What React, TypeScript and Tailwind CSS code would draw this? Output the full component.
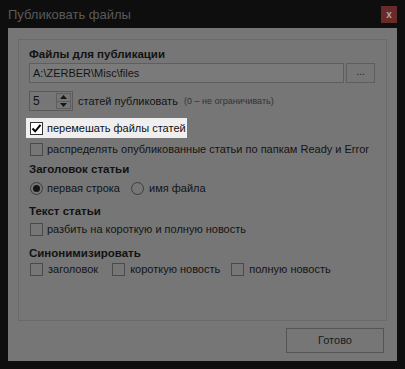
import React from "react";

const font = { fontFamily: '"Liberation Sans", Arial, sans-serif' };

function Box({ checked = false, light = false }: { checked?: boolean; light?: boolean }) {
  return (
    <span
      className={`w-[13px] h-[13px] shrink-0 border flex items-center justify-center ${
        light ? "bg-white border-[#333]" : "border-[#4a4a4a]"
      }`}
    >
      {checked && (
        <svg width="11" height="11" viewBox="0 0 11 11">
          <path d="M1.5 5.5 L4.2 8.3 L9.5 1.8" stroke="#000" strokeWidth="2" fill="none" />
        </svg>
      )}
    </span>
  );
}

function Radio({ checked = false }: { checked?: boolean }) {
  return (
    <span className="w-[13px] h-[13px] shrink-0 rounded-full border border-[#3c3c3c] flex items-center justify-center">
      {checked && <span className="w-[7px] h-[7px] rounded-full bg-[#151515]" />}
    </span>
  );
}

function Header({ text, className = "" }: { text: string; className?: string }) {
  return (
    <div className={`h-[14px] leading-[14px] text-[11.5px] font-bold text-[#121212] whitespace-nowrap ${className}`}>
      {text}
    </div>
  );
}

export default function App() {
  return (
    <div className="w-[405px] h-[369px] bg-[#0e0e0e] flex flex-col text-[#141414] whitespace-nowrap" style={font}>
      {/* title bar */}
      <div className="h-[28px] flex justify-between pl-[8px] pr-[8px]">
        <span className="text-[13px] leading-[29px] text-[#5a5a5a]">Публиковать файлы</span>
        <span className="mt-[6px] w-[16px] h-[17px] bg-[#6a2a2a] flex items-center justify-center text-[#a8a8a8] text-[10px] font-bold leading-none">
          x
        </span>
      </div>

      {/* client */}
      <div className="mx-[8px] h-[333px] bg-[#767676] pt-[11px] px-[10px] flex flex-col">
        <div className="h-[282px] border border-[#6a6a6a] pl-[10px] pt-[7px] flex flex-col">
          <Header text="Файлы для публикации" />
          <div className="mt-[2px] flex gap-[2px]">
            <div className="w-[315px] h-[20px] border border-[#5e5e5e] bg-[#7a7a7a] pl-[3px] text-[11px] leading-[18px]">
              A:\ZERBER\Misc\files
            </div>
            <div className="w-[29px] h-[20px] border border-[#5e5e5e] flex items-center justify-center text-[10px] leading-none text-[#2a1a30] pb-[2px]">
              ...
            </div>
          </div>

          <div className="mt-[8px] h-[20px] flex items-center">
            <div className="w-[44px] h-[20px] border border-[#5a5a5a] flex">
              <span className="flex-1 pl-[3px] text-[12px] leading-[18px]">5</span>
              <div className="w-[15px] my-[1px] mr-[1px] border border-[#5e5e5e] flex flex-col">
                <div className="flex-1 flex items-center justify-center border-b border-[#5e5e5e]">
                  <svg width="7" height="4" viewBox="0 0 7 4"><path d="M0 4 L3.5 0 L7 4Z" fill="#151515" /></svg>
                </div>
                <div className="flex-1 flex items-center justify-center">
                  <svg width="7" height="4" viewBox="0 0 7 4"><path d="M0 0 L3.5 4 L7 0Z" fill="#151515" /></svg>
                </div>
              </div>
            </div>
            <span className="ml-[5px] text-[11px]">статей публиковать</span>
            <span className="ml-[6px] text-[9px] text-[#333] mt-[2px]">(0 – не ограничивать)</span>
          </div>

          <div className="mt-[7px] -ml-[3px] w-[161px] h-[20px] bg-[#efefef] pl-[4px] flex items-center gap-[4px]">
            <Box checked light />
            <span className="text-[11px] text-[#111]">перемешать файлы статей</span>
          </div>

          <div className="mt-[2px] h-[18px] pl-[1px] flex items-center gap-[4px]">
            <Box />
            <span className="text-[11px]">распределять опубликованные статьи по папкам Ready и Error</span>
          </div>

          <Header text="Заголовок статьи" className="mt-[4px]" />
          <div className="mt-[3px] h-[18px] pl-[1px] flex items-center">
            <Radio checked />
            <span className="ml-[4px] text-[11px]">первая строка</span>
            <span className="ml-[11px]"><Radio /></span>
            <span className="ml-[5px] text-[11px]">имя файла</span>
          </div>

          <Header text="Текст статьи" className="mt-[7px]" />
          <div className="mt-[2px] h-[18px] pl-[1px] flex items-center gap-[4px]">
            <Box />
            <span className="text-[11px]">разбить на короткую и полную новость</span>
          </div>

          <Header text="Синонимизировать" className="mt-[8px]" />
          <div className="h-[18px] pl-[1px] flex items-center">
            <Box />
            <span className="ml-[5px] text-[11px]">заголовок</span>
            <span className="ml-[14px]"><Box /></span>
            <span className="ml-[5px] text-[11px]">короткую новость</span>
            <span className="ml-[11px]"><Box /></span>
            <span className="ml-[5px] text-[11px]">полную новость</span>
          </div>
        </div>

        <div className="mt-[7px] flex justify-end pr-[3px]">
          <div className="w-[98px] h-[25px] border border-[#545454] flex items-center justify-center text-[11px] text-[#1a1a1a]">
            Готово
          </div>
        </div>
      </div>
    </div>
  );
}
